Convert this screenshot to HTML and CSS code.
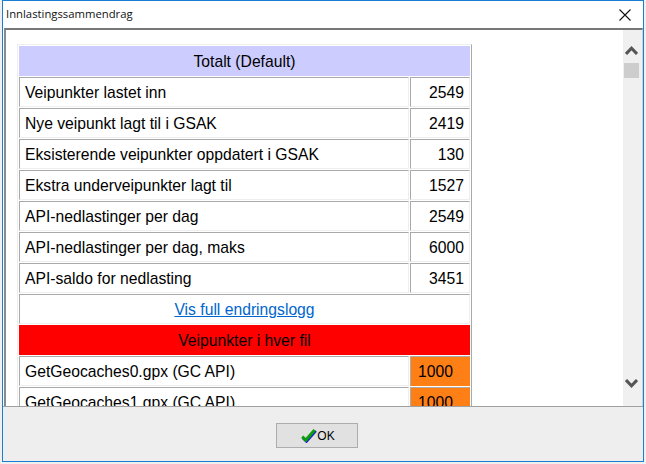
FILE: index.html
```html
<!DOCTYPE html>
<html lang="no">
<head>
<meta charset="utf-8">
<title>Innlastingssammendrag</title>
<link rel="stylesheet" href="styles.css">
</head>
<body>
<div class="window">
  <div class="titlebar">
    <span class="title">Innlastingssammendrag</span>
    <svg class="close" width="14" height="14" viewBox="0 0 14 14"><path d="M1.5 1.5 L12.5 12.5 M12.5 1.5 L1.5 12.5" stroke="#111" stroke-width="1.1" fill="none"/></svg>
  </div>
  <div class="content">
    <div class="viewport">
      <table class="summary">
        <colgroup><col class="col-name"><col class="col-value"></colgroup>
        <tr><td class="head" colspan="2">Totalt (Default)</td></tr>
        <tr><td>Veipunkter lastet inn</td><td class="num">2549</td></tr>
        <tr><td>Nye veipunkt lagt til i GSAK</td><td class="num">2419</td></tr>
        <tr><td>Eksisterende veipunkter oppdatert i GSAK</td><td class="num">130</td></tr>
        <tr><td>Ekstra underveipunkter lagt til</td><td class="num">1527</td></tr>
        <tr><td>API-nedlastinger per dag</td><td class="num">2549</td></tr>
        <tr><td>API-nedlastinger per dag, maks</td><td class="num">6000</td></tr>
        <tr><td>API-saldo for nedlasting</td><td class="num">3451</td></tr>
        <tr><td class="link" colspan="2"><a href="#">Vis full endringslogg</a></td></tr>
        <tr><td class="red" colspan="2">Veipunkter i hver fil</td></tr>
        <tr><td>GetGeocaches0.gpx (GC API)</td><td class="orange">1000</td></tr>
        <tr><td>GetGeocaches1.gpx (GC API)</td><td class="orange">1000</td></tr>
      </table>
    </div>
    <div class="scrollbar">
      <svg class="arrow" width="13" height="9" viewBox="0 0 13 9"><path d="M1 8 L6.5 2.2 L12 8" stroke="#555" stroke-width="3" fill="none"/></svg>
      <div class="thumb"></div>
      <svg class="arrow down" width="13" height="9" viewBox="0 0 13 9"><path d="M1 1 L6.5 6.8 L12 1" stroke="#555" stroke-width="3" fill="none"/></svg>
    </div>
  </div>
  <div class="footer">
    <button class="ok" type="button">
      <svg class="check" width="16" height="14" viewBox="0 0 16 14"><path d="M1.5 9 L5.5 12.8 L15 2" stroke="#2222cc" stroke-width="2.2" fill="none"/><path d="M1.2 7.6 L4.8 11 L13.6 1" stroke="#0aa00a" stroke-width="3" fill="none"/></svg><span>OK</span>
    </button>
  </div>
</div>
</body>
</html>
```
FILE: styles.css
```css
html, body {
  margin: 0;
  padding: 0;
  height: 100%;
  background: #f0f0f0;
  overflow: hidden;
}
.window {
  box-sizing: border-box;
  width: 642px;
  height: 462px;
  margin-left: 2px;
  border: 1px solid #1a7fd4;
  background: #fff;
  display: flex;
  flex-direction: column;
  font-family: "Liberation Sans", Arial, sans-serif;
  color: #000;
}
.titlebar {
  height: 27px;
  flex: none;
  background: #fff;
  display: flex;
  align-items: center;
  justify-content: space-between;
  padding: 0 11px 0 3px;
}
.title {
  font-family: "Open Sans", "Noto Sans", sans-serif;
  font-size: 11.3px;
  line-height: 24px;
  height: 25px;
  color: #111;
}
.close { display: block; }
.content {
  height: 378px;
  flex: none;
  display: flex;
  box-sizing: border-box;
  border-top: 2px solid #777;
  border-left: 2px solid #8a8a8a;
  border-right: 1px solid #d0d0d0;
  margin: 0 0 0 1px;
  background: #fff;
}
.viewport {
  flex: 1;
  overflow: hidden;
  padding: 14px 0 0 11px;
}
.summary {
  width: 455px;
  border-collapse: separate;
  border-spacing: 1px;
  border: 1px solid;
  border-color: #eeeeee #a9a9a9 #a9a9a9 #eeeeee;
  font-size: 15.7px;
  table-layout: fixed;
}
.col-value { width: 60px; }
.summary td {
  box-sizing: border-box;
  height: 30px;
  padding: 2px 5px 0;
  border: 1px solid;
  border-color: #a9a9a9 #eeeeee #eeeeee #a9a9a9;
  white-space: nowrap;
  overflow: hidden;
}
.summary td.head {
  background: #ccccff;
  text-align: center;
  border-color: #ccccff;
}
.summary td.num {
  text-align: right;
}
.summary td.link { text-align: center; }
.summary td.link a { color: #0066cc; }
.summary td.red {
  background: #ff0000;
  border-color: #ff0000;
  text-align: center;
}
.summary td.orange {
  background: #ff7f17;
  border-color: #aaa #ff7f17 #ff7f17 #aaa;
  padding-left: 7px;
}
.scrollbar {
  width: 19px;
  flex: none;
  background: #f0f0f0;
  display: flex;
  flex-direction: column;
  align-items: center;
  padding: 16px 2px 0 0;
  box-sizing: border-box;
}
.arrow { display: block; flex: none; }
.thumb {
  width: 15px;
  height: 15px;
  margin-top: 8px;
  background: #cdcdcd;
  flex: none;
}
.down { margin-top: auto; margin-bottom: 18px; }
.footer {
  flex: 1;
  display: flex;
  justify-content: center;
  align-items: flex-start;
  padding: 16px 12px 0 0;
  border-top: 1px solid #a0a0a0;
  background: #eeeeee;
}
.ok {
  box-sizing: border-box;
  width: 82px;
  height: 25px;
  background: #e1e1e1;
  border: 1px solid #adadad;
  display: flex;
  align-items: center;
  justify-content: center;
  padding: 0 0 0 2px;
  font-family: "Liberation Sans", Arial, sans-serif;
  font-size: 12px;
  color: #000;
}
.check { display: block; }
```
